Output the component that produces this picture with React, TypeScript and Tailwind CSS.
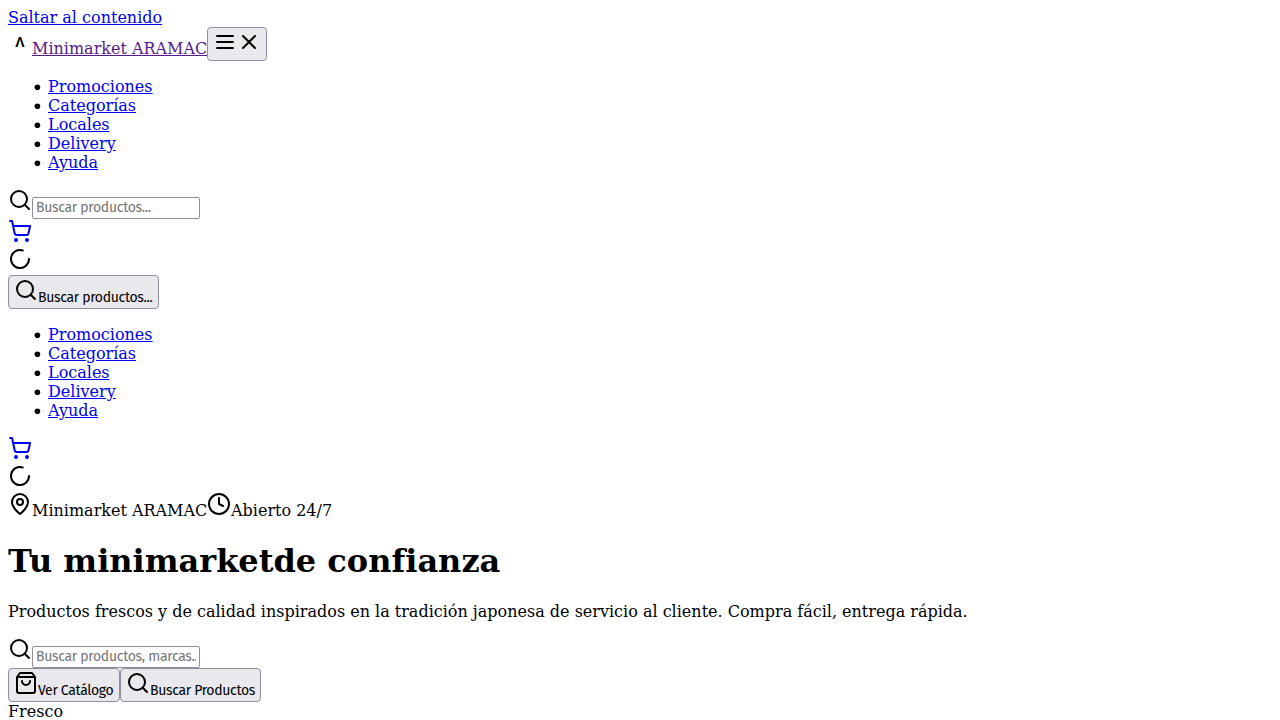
import type { ReactNode } from 'react';

const links = ['Promociones', 'Categorías', 'Locales', 'Delivery', 'Ayuda'];

function Icon({ children }: { children: ReactNode }) {
  return (
    <svg
      className="block h-6 w-6 shrink-0"
      viewBox="0 0 24 24"
      fill="none"
      stroke="currentColor"
      strokeWidth="2"
      strokeLinecap="round"
      strokeLinejoin="round"
    >
      {children}
    </svg>
  );
}

const Search = () => (
  <Icon>
    <circle cx="11" cy="11" r="8" />
    <path d="m21 21-4.3-4.3" />
  </Icon>
);

const Cart = () => (
  <a href="#carrito" className="flex h-7 text-[#0000ee]">
    <Icon>
      <circle cx="8" cy="21" r="1" />
      <circle cx="19" cy="21" r="1" />
      <path d="M2.05 2.05h2l2.66 12.42a2 2 0 0 0 2 1.58h9.78a2 2 0 0 0 1.95-1.57l1.65-7.43H5.12" />
    </Icon>
  </a>
);

const Loader = () => (
  <div className="flex h-7">
    <Icon>
      <path d="M21 12a9 9 0 1 1-6.219-8.56" />
    </Icon>
  </div>
);

function NavList() {
  return (
    <ul className="my-4 pl-[26px]">
      {links.map((label) => (
        <li key={label} className="flex h-[19px]">
          <svg className="mt-[7px] mr-[7px] block h-[7px] w-[7px]" viewBox="0 0 7 7">
            <circle cx="3.4" cy="3.3" r="2.8" />
          </svg>
          <a href="#nav" className="text-[#0000ee] underline">
            {label}
          </a>
        </li>
      ))}
    </ul>
  );
}

function Button({ children, className }: { children: ReactNode; className: string }) {
  return (
    <button
      className={`flex h-[34px] shrink-0 items-start rounded-[4px] border border-[#8f8f9d] bg-[#e9e9ed] pt-[2px] pl-[5px] ${className}`}
    >
      {children}
    </button>
  );
}

const Label = ({ children }: { children: ReactNode }) => (
  <span className="mt-3 block font-['Fira_Sans','Noto_Sans',sans-serif] text-[14px] leading-4 font-normal tracking-[-0.33px] whitespace-nowrap">
    {children}
  </span>
);

function SearchField({ placeholder }: { placeholder: string }) {
  return (
    <div className="flex h-[31px]">
      <Search />
      <input
        placeholder={placeholder}
        className="mt-[9px] h-[22px] w-[168px] rounded-[2px] border border-[#8f8f9d] bg-white px-[3px] pb-[2px] font-['Fira_Sans','Noto_Sans',sans-serif] text-[14px] leading-4 tracking-[-0.31px] placeholder:text-[#757575]"
      />
    </div>
  );
}

export default function App() {
  return (
    <div className="h-[720px] overflow-hidden bg-white p-2 font-['DejaVu_Serif',serif] text-base leading-[19px] text-black">
      <div className="h-[19px]">
        <a href="#contenido" className="text-[#0000ee] underline">
          Saltar al contenido
        </a>
      </div>
      <div className="flex h-[34px]">
        <svg className="mt-[3px] block h-6 w-6" viewBox="0 0 24 24">
          <text x="12" y="17" textAnchor="middle" className="font-['Liberation_Sans',sans-serif] text-[14px] font-bold">
            Λ
          </text>
        </svg>
        <a href="#inicio" className="mt-3 w-[175px] whitespace-nowrap text-[#551a8b] underline">
          Minimarket ARAMAC
        </a>
        <Button className="w-[60px]">
          <Icon>
            <path d="M4 6h16M4 12h16M4 18h16" />
          </Icon>
          <Icon>
            <path d="M18 6 6 18M6 6l12 12" />
          </Icon>
        </Button>
      </div>
      <NavList />
      <SearchField placeholder="Buscar productos..." />
      <Cart />
      <Loader />
      <Button className="w-[151px]">
        <Search />
        <Label>Buscar productos...</Label>
      </Button>
      <NavList />
      <Cart />
      <Loader />
      <div className="flex h-7">
        <Icon>
          <path d="M20 10c0 6-8 12-8 12s-8-6-8-12a8 8 0 0 1 16 0Z" />
          <circle cx="12" cy="10" r="3" />
        </Icon>
        <span className="mt-[9px] w-[175px] whitespace-nowrap">Minimarket ARAMAC</span>
        <Icon>
          <circle cx="12" cy="12" r="10" />
          <path d="M12 6v6l4 2" />
        </Icon>
        <span className="mt-[9px]">Abierto 24/7</span>
      </div>
      <h1 className="mt-[22px] text-[32px] leading-[38px] font-bold [font-variant-ligatures:none]">
        <span>Tu minimarket</span>
        <span>de confianza</span>
      </h1>
      <p className="mt-[22px] mb-4">
        Productos frescos y de calidad inspirados en la tradición japonesa de servicio al cliente. Compra fácil, entrega
        rápida.
      </p>
      <SearchField placeholder="Buscar productos, marcas..." />
      <div className="flex">
        <Button className="w-[112px]">
          <Icon>
            <path d="M6 2 3 6v14a2 2 0 0 0 2 2h14a2 2 0 0 0 2-2V6l-3-4ZM3 6h18" />
            <path d="M16 10a4 4 0 0 1-8 0" />
          </Icon>
          <Label>Ver Catálogo</Label>
        </Button>
        <Button className="w-[141px]">
          <Search />
          <Label>Buscar Productos</Label>
        </Button>
      </div>
      <div>Fresco</div>
    </div>
  );
}
